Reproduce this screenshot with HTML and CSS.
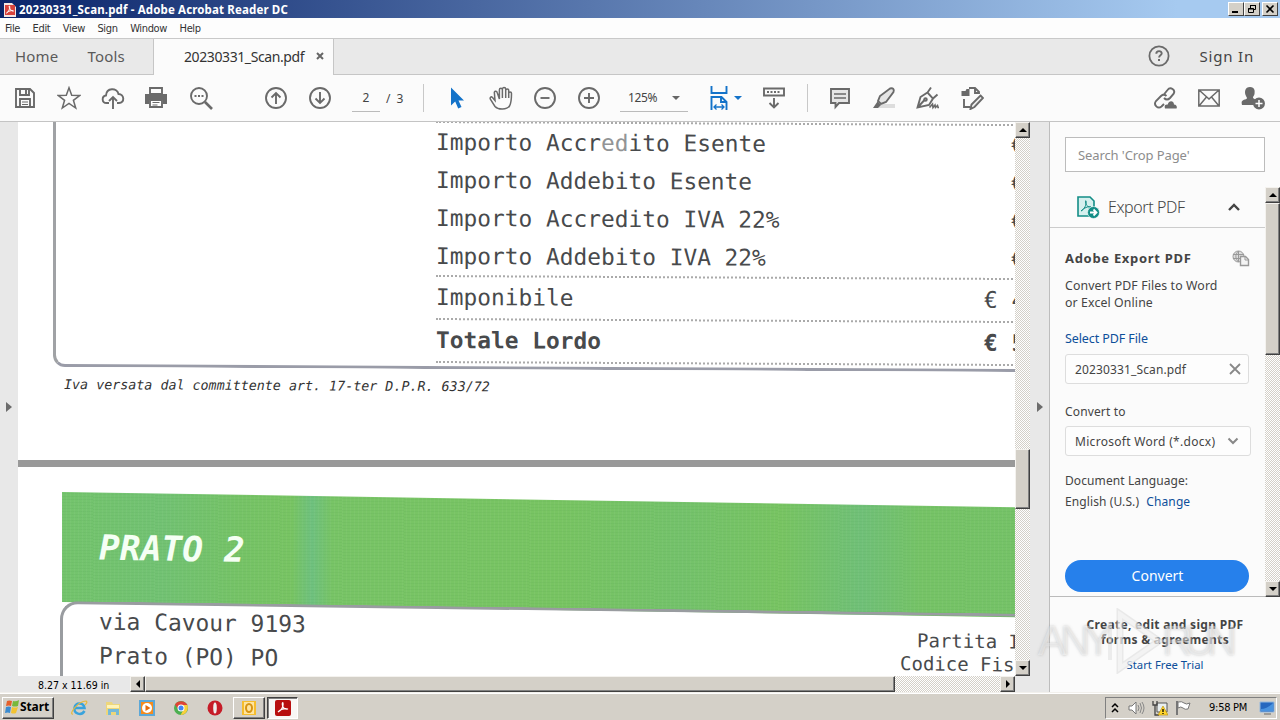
FILE: index.html
```html
<!DOCTYPE html>
<html lang="en">
<head>
  <meta charset="UTF-8" />
  <meta name="viewport" content="width=device-width, initial-scale=1" />
  <title>20230331_Scan.pdf - Adobe Acrobat Reader DC</title>
  <link rel="stylesheet" href="styles.css">
</head>
<body>
  <!-- Title bar -->
  <header class="titlebar">
    <svg class="app-icon" width="12" height="15" viewBox="0 0 12 15"><path d="M0 1h8l4 4v10H0z" fill="#f4e6e4"/><path d="M1 3h10v10H1z" fill="#d8433c"/><path d="M2.5 11c2-1 4-5 3-7-1-1 0 5 4 5-2-1-5 0-7 2" fill="none" stroke="#fff"/></svg>
    <span class="title">20230331_Scan.pdf - Adobe Acrobat Reader DC</span>
    <div class="win-buttons">
      <button><svg width="12" height="10" viewBox="0 0 12 10"><path d="M2 8h6" stroke="#000" stroke-width="2"/></svg></button>
      <button><svg width="12" height="10" viewBox="0 0 12 10"><path d="M4.5 4V1.5h5v4H8M4 1.5h6M2.5 4.500h5v4h-5zM2 5h6" fill="none" stroke="#000"/></svg></button>
      <button class="close"><svg width="12" height="10" viewBox="0 0 12 10"><path d="M2.500 1.500l7 7m0-7l-7 7" stroke="#000" stroke-width="1.600"/></svg></button>
    </div>
  </header>

  <nav class="menubar">
    <span>File</span><span>Edit</span><span>View</span><span>Sign</span><span>Window</span><span>Help</span>
  </nav>

  <div class="tabs">
    <div class="tab-list">
      <span class="home">Home</span>
      <span class="tools">Tools</span>
    </div>
    <div class="tab-active">
      <span>20230331_Scan.pdf</span>
      <svg width="8" height="8" viewBox="0 0 8 8"><path d="M1 1l6 6M7 1L1 7" stroke="#666" stroke-width="2"/></svg>
    </div>
    <div class="tab-right">
      <svg width="22" height="22" viewBox="0 0 22 22" fill="none" stroke="#6a6a6a"><circle cx="11" cy="11" r="9.600" stroke-width="1.800"/><path d="M8.300 8.800c0-3.600 5.600-3.500 5.400-.3-.1 1.900-2.600 1.900-2.600 4" stroke-width="1.900"/><path d="M11 14v2" stroke-width="2"/></svg>
      <span>Sign In</span>
    </div>
  </div>

  <div class="toolbar">
    <div class="tool"><svg viewBox="0 0 24 24"><path d="M3 3h14l4 4v14H3z"/><path d="M7 3v6h9V3M13 4v4M7 21v-8h10v8"/><path d="M9 16h6M9 18.500h6" stroke-width="1"/></svg></div>
    <div class="tool"><svg viewBox="0 0 24 24"><path d="M12 1.800l2.700 7.500 8.200.1-6.500 4.900 2.300 7.700-6.700-4.600L5.300 22l2.300-7.700-6.500-4.900 8.200-.1z" stroke-width="1.500"/></svg></div>
    <div class="tool"><svg viewBox="0 0 24 24"><path d="M8 17H5.500C.5 17 .5 10 5 9.500c.5-8 11-8 12.500-1.500C23.500 8 24 17 18 17h-2M12 23V11M8 15l4-4 4 4"/></svg></div>
    <div class="tool print"><svg viewBox="0 0 24 24"><path d="M6 2h12v6H6z"/><path d="M1 8h22v10h-4v-4H5v4H1z" fill="#6a6a6a" stroke="none"/><path d="M6 14h12v7H6z" fill="#fff"/><path d="M8.500 16.500h7M8.500 19h5" stroke-width="1.200"/></svg></div>
    <div class="tool"><svg viewBox="0 0 24 24"><circle cx="10" cy="10" r="8"/><path d="M16 16l7 7" stroke-width="2.600"/><path d="M5.500 10h9" stroke-width="2" stroke-dasharray="2 1.500"/></svg></div>
    <div class="tool group"><svg viewBox="0 0 24 24"><circle cx="12" cy="12" r="10"/><path d="M12 18V7M7.500 11.500L12 7l4.500 4.500"/></svg></div>
    <div class="tool"><svg viewBox="0 0 24 24"><circle cx="12" cy="12" r="10"/><path d="M12 6v11M7.500 12.500L12 17l4.500-4.500"/></svg></div>
    <div class="page-field">2</div>
    <div class="page-total">/ &nbsp;3</div>
    <div class="divider"></div>
    <div class="tool"><svg viewBox="0 0 24 24"><path d="M6 1.500v18l4.200-4 3 7 3.300-1.500-3-6.500h5.500z" fill="#1473c9" stroke="none"/></svg></div>
    <div class="tool"><svg viewBox="0 0 24 24"><path d="M6 14.500L3.500 11.500C2 10 .5 11.500 1.500 13.500l4.500 7c3 3.500 12 3.500 14.500-.5 1.800-3 2-7 2-12.500 0-2-2.800-2-2.800 0V12 4.500c0-2-3-2-3 0V12 3.200c0-2.200-3.300-2.200-3.300 0V12 3.800c0-2-3-2-3 0V13L8.200 6.500c-.6-2-3.300-1.300-2.800.6z" stroke-width="1.500"/></svg></div>
    <div class="tool"><svg viewBox="0 0 24 24"><circle cx="12" cy="12" r="10"/><path d="M7.500 12h9"/></svg></div>
    <div class="tool"><svg viewBox="0 0 24 24"><circle cx="12" cy="12" r="10"/><path d="M7 12h10M12 7v10"/></svg></div>
    <div class="zoom-field"><span>125%</span><i class="caret"></i></div>
    <div class="tool fit"><svg viewBox="0 0 24 24"><g stroke="#1473c9"><path d="M4.500 0v7h15V0M4.500 24V11h10l5 5v8M14 11v5h5"/><path d="M7 21h10M9.500 18.500L7 21l2.500 2.500M14.500 18.500L17 21l-2.500 2.500" stroke-width="1.300"/></g></svg><i class="caret blue"></i></div>
    <div class="tool"><svg viewBox="0 0 24 24"><path d="M2 2.500h20v7H2zM12 12v9M7.500 17l4.500 4.500 4.500-4.500"/><path d="M5 6h14" stroke-dasharray="2 1.500"/></svg></div>
    <div class="divider last"></div>
    <div class="tool"><svg viewBox="0 0 24 24"><path d="M3 3h18v14H11l-3.500 4v-4H3z" fill="#e5e5e5"/><path d="M6 8h12M6 12h12" stroke-width="1.400"/></svg></div>
    <div class="tool"><svg viewBox="0 0 24 24"><path d="M8 18h15v4H4z" fill="#ddd" stroke="none"/><path d="M18 2.500c3-1 4.500 1 3.500 3.500L14 16l-5 2-3-3 2-5z" fill="#e5e5e5"/><path d="M5.500 15.500L9 19l-3 3H1z" fill="#6a6a6a" stroke="none"/></svg></div>
    <div class="tool"><svg viewBox="0 0 24 24"><path d="M1.500 21.500L4.500 11l7-4.500 5.500 6-4 6.500zL8.500 14M11.500 6.500l3.500-5M17 12.500l4.500-4"/><circle cx="9.500" cy="13.500" r="1.300"/><path d="M13.500 21.500l3-3.500.5 3.500 2-2.500.5 2.500 2-2 .5 2h1" stroke-width="1.600"/></svg></div>
    <div class="tool"><svg viewBox="0 0 24 24"><path d="M9 2h6l4 4v2M15 2v5h4M4 13v8h6"/><path d="M1.500 5h4l1-2h3v7h-8z" fill="#6a6a6a" stroke="none"/><path d="M20.500 9.500l2.500 2.500-8.500 9-4 2 1-4.500z" fill="#eee"/></svg></div>
    <div class="tool share"><svg viewBox="0 0 24 24"><path d="M10.500 9l4-5c3-4 8.500 0 6 4L17 12c-2 2-4 2-6 0M13.500 10c-2-2-4-1.500-5.500 0l-5 5c-3 4 2 8.500 5.500 5.500l2.500-2.500" /><path d="M12 22.500c-1-3 .5-4.500 2.800-4 1-4.500 6-4 6.200 0 3 0 3.200 3 2.500 4z" fill="#6a6a6a" stroke="none"/></svg></div>
    <div class="tool"><svg viewBox="0 0 24 24"><path d="M1.800 4h20.400v16H1.800zM2 4l10 9 10-9M2 20l7.500-9M22 20l-7.500-9" stroke-width="1.500"/></svg></div>
    <div class="tool"><svg viewBox="0 0 24 24"><path d="M9 1c5 0 5 4 4.500 7-.4 2-1.500 2-1.500 4l3 2c-2 1.500-2.500 3-2 5H1c-1-4 0-4.500 3-5.500s2-1.500 1-3.500C3 6 4 1 9 1" fill="#6a6a6a" stroke="none"/><circle cx="18" cy="17.500" r="5" fill="#6a6a6a"/><path d="M14.500 17.500h7M18 14v7" stroke="#fff" stroke-width="1.500"/></svg></div>
  </div>

  <main class="workspace">
    <div class="left-rail"><i class="arrow-right"></i></div>

    <section class="viewer">
      <div class="viewer-main">
        <div class="doc">
          <!-- bottom of scanned page 2 -->
          <div class="page first">
            <div class="frame">
              <div class="amounts">
                <div class="row"><span class="label">Importo Accr<span class="faded">ed</span>ito Esente</span><span>€</span></div>
                <div class="row"><span class="label">Importo Addebito Esente</span><span>€</span></div>
                <div class="row"><span class="label">Importo Accredito IVA 22%</span><span>€</span></div>
                <div class="row"><span class="label">Importo Addebito IVA 22%</span><span>€</span></div>
                <div class="row total"><span class="label">Imponibile</span><span>€ 4</span></div>
                <div class="row total bold"><span class="label">Totale Lordo</span><span>€ 5</span></div>
              </div>
            </div>
            <p class="note">Iva versata dal committente art. 17-ter D.P.R. 633/72</p>
          </div>
          <!-- top of scanned page 3 -->
          <div class="page second">
            <div class="band"><h1>PRATO 2</h1></div>
            <div class="address">
              <div class="address-left">
                <p>via Cavour 9193</p>
                <p>Prato (PO) PO</p>
              </div>
              <div class="address-right">
                <p>Partita IVA</p>
                <p>Codice Fiscale</p>
              </div>
            </div>
          </div>
        </div>
        <div class="vscroll">
          <div class="sb-btn"><i class="up"></i></div>
          <div class="sb-thumb"></div>
          <div class="sb-btn bottom"><i class="down"></i></div>
        </div>
      </div>
      <div class="viewer-foot">
        <span class="page-size">8.27 x 11.69 in</span>
        <div class="hscroll">
          <div class="sb-btn"><i class="left"></i></div>
          <div class="sb-thumb"></div>
          <div class="sb-btn bottom"><i class="right"></i></div>
        </div>
      </div>
    </section>

    <div class="right-rail"><i class="arrow-right"></i></div>

    <aside class="panel">
      <div class="search">Search 'Crop Page'</div>
      <div class="panel-body">
        <div class="panel-content">
          <div class="panel-head">
            <svg width="24" height="24" viewBox="0 0 24 24" fill="none"><path d="M2 2h12l4 4v15H2z" fill="#d5f0ee" stroke="#138d86" stroke-width="1.600"/><path d="M5 16c3-1 6-7 5-10-1-2-1 7 5 6-3-1-7 1-10 4" stroke="#138d86"/><circle cx="17.500" cy="17.500" r="6" fill="#138d86" stroke="#fff" stroke-width=".6"/><path d="M14 17.500h6M17.500 14.500l3 3-3 3" stroke="#fff" stroke-width="1.800"/></svg>
            <span>Export PDF</span>
            <svg class="chev" width="14" height="9" viewBox="0 0 14 9"><path d="M2 7l5-5 5 5" fill="none" stroke="#444" stroke-width="2.400"/></svg>
          </div>
          <div class="export">
            <div class="export-title">
              <strong>Adobe Export PDF</strong>
              <svg width="18" height="17" viewBox="0 0 18 17" fill="none" stroke="#999"><circle cx="6.500" cy="6.500" r="5.500" fill="#ddd"/><path d="M6.500 1v11M1 4.500h11M1 8.500h7M6.500 1c-4 4-3 8 0 11"/><path d="M8.500 6.500h5l3 3v6h-8z" fill="#f4f4f4" stroke-width="1.400"/><path d="M13 7v3h3"/></svg>
            </div>
            <p class="desc">Convert PDF Files to Word<br>or Excel Online</p>
            <a class="select-link">Select PDF File</a>
            <div class="field file"><span>20230331_Scan.pdf</span><svg width="12" height="12" viewBox="0 0 12 12"><path d="M1 1l10 10M11 1L1 11" stroke="#888" stroke-width="1.800"/></svg></div>
            <label class="to">Convert to</label>
            <div class="field format"><span>Microsoft Word (*.docx)</span><svg width="12" height="8" viewBox="0 0 12 8"><path d="M1.500 1.500L6 6l4.500-4.500" fill="none" stroke="#888" stroke-width="2"/></svg></div>
            <p class="lang">Document Language:</p>
            <p class="lang-value">English (U.S.) <a>Change</a></p>
            <button class="convert">Convert</button>
          </div>
        </div>
        <div class="vscroll">
          <div class="sb-btn"><i class="up"></i></div>
          <div class="sb-thumb"></div>
          <div class="sb-btn bottom"><i class="down"></i></div>
        </div>
      </div>
      <div class="promo">
        <strong>Create, edit and sign PDF<br>forms &amp; agreements</strong>
        <a>Start Free Trial</a>
      </div>
      <div class="watermark">
        <span>ANY</span>
        <svg width="64" height="66" viewBox="0 0 64 66"><path d="M20 6l39 27-39 27z" fill="none" stroke="#d8d8d8" stroke-opacity=".5" stroke-width="7"/><path d="M20 6l39 27-39 27z" fill="none" stroke="#fff" stroke-opacity=".45" stroke-width="4"/><path d="M10 14v38" stroke="#ddd" stroke-opacity=".5" stroke-width="4"/></svg>
        <span>RUN</span>
      </div>
    </aside>
  </main>

  <!-- Windows taskbar -->
  <footer class="taskbar">
    <button class="start"><svg width="16" height="16" viewBox="0 0 16 16"><path d="M3 2q2-1 5 0L7 7q-2-1-5 0z" fill="#e5602b"/><path d="M9 2q3 1 6-1l-1 6q-3 1-6 0z" fill="#78b83b"/><path d="M2 8q3-1 5 0l-1 6q-2-1-5 0z" fill="#3b8bd0"/><path d="M8 8q3 1 6 0l-2 6q-2 1-5 0z" fill="#f3c332"/></svg>Start</button>
    <div class="quick">
      <svg viewBox="0 0 18 18" fill="none"><path d="M14.500 12c-3 5-11 3-10-3s9-6 10 0H5" stroke="#39a3dc" stroke-width="2.500"/><path d="M3 15C-2 16 8 2 16 2c2 1 0 3-1 4" stroke="#e7b93c" stroke-width="1.200"/></svg>
      <svg viewBox="0 0 18 18"><path d="M2 3h6l1 2h7v11H2z" fill="#edd67b"/><path d="M3 6h12v3H3z" fill="#fff3b8"/><path d="M4 10h11v6h-3v-3H7v3H4z" fill="#75b9d8"/></svg>
      <svg viewBox="0 0 18 18"><path d="M1 1h16v16H1z" fill="#5ca8d8"/><path d="M3 3h12v12H3z" fill="#f58b1e"/><circle cx="9" cy="9" r="5" fill="#fff"/><path d="M7.500 6l5 3-5 3z" fill="#e66b0b"/></svg>
      <svg viewBox="0 0 18 18"><circle cx="9" cy="9" r="7" fill="#4caf50"/><path d="M3 5.500C6 1 13 1 15.500 6H9L6 10z" fill="#df4437"/><path d="M15.500 6c1.500 5-2 10-7 10L12 10 11 6z" fill="#f9cf3b"/><circle cx="9" cy="9" r="3.500" fill="#fff"/><circle cx="9" cy="9" r="2.500" fill="#4285f4"/></svg>
      <svg viewBox="0 0 18 18"><circle cx="9" cy="9" r="7.500" fill="#c61c28"/><ellipse cx="9" cy="9" rx="1.800" ry="5.500" fill="#eee"/></svg>
    </div>
    <div class="task"><svg width="16" height="16" viewBox="0 0 16 16"><path d="M1 1h14v14H1z" fill="#f6bd2d"/><path d="M3 2h10v12H3z" fill="#ffe5a0"/><ellipse cx="8" cy="8" rx="3" ry="4" fill="none" stroke="#d79516" stroke-width="2"/></svg></div>
    <div class="task pressed"><svg width="16" height="16" viewBox="0 0 16 16"><rect width="16" height="16" rx="2" fill="#b80f0f"/><path d="M3 12c3-1 6-6 5-9-1-2-2 7 5 6-4-1-7 0-10 3" fill="none" stroke="#fff" stroke-width="1.200"/></svg></div>
    <div class="tray">
      <svg width="8" height="12" viewBox="0 0 8 12"><path d="M1 5l3-3 3 3M1 10l3-3 3 3" fill="none" stroke="#000" stroke-width="1.500"/></svg>
      <svg class="speaker" width="17" height="14" viewBox="0 0 17 14" fill="none"><path d="M1 5h3l4-4v12L4 9H1z" fill="#fff" stroke="#777"/><path d="M10 4q2 3 0 6M12 2q3 5 0 10M14 1q4 6 0 12" stroke="#888"/></svg>
      <svg class="network" width="16" height="16" viewBox="0 0 16 16"><path d="M5 3h10v9H5z" fill="#e8eef0" stroke="#555"/><path d="M1 1v4h4V1M3 5v10h4" fill="none" stroke="#444" stroke-width="1.300"/><path d="M11 6l5 9H6z" fill="#ffd52e" stroke="#b58a00" stroke-width=".6"/><path d="M11 9v3M11 13v1" stroke="#000" stroke-width="1.300"/></svg>
      <svg class="flag" width="17" height="16" viewBox="0 0 17 16"><path d="M2 1v14" stroke="#777" stroke-width="2"/><path d="M3 2q4-1 6 1t6 0l-2 6q-3 1-5-1t-5 0z" fill="#fff" stroke="#777"/></svg>
      <span class="clock">9:58 PM</span>
      <svg class="desktop" width="16" height="14" viewBox="0 0 16 14"><path d="M1 1h14v10H1z" fill="#2668bf" stroke="#94b9df"/><path d="M2 8q6 0 12-6v8H2z" fill="#4a93df"/><path d="M5 13h7" stroke="#666"/></svg>
    </div>
  </footer>
</body>
</html>
```
FILE: styles.css
```css
* {
  margin: 0;
  padding: 0;
  box-sizing: border-box;
}

body {
  width: 1280px;
  height: 720px;
  overflow: hidden;
  display: flex;
  flex-direction: column;
  background: #fbfbfb;
  color: #444;
  font-family: "Noto Sans", "Open Sans", sans-serif;
  white-space: nowrap;
}

svg {
  display: block;
  flex: none;
}

button {
  font: inherit;
  border: none;
}

/* Title bar and menu */
.titlebar {
  height: 18px;
  flex: none;
  display: flex;
  align-items: center;
  padding: 0 2px 0 4px;
  background: linear-gradient(90deg, #0a246a, #a6caf0 92%);
}

.title {
  margin-left: 3px;
  color: #fff;
  font-size: 11.5px;
  font-weight: bold;
  letter-spacing: 0.14px;
}

.win-buttons {
  margin-left: auto;
  display: flex;
}

.win-buttons button {
  width: 16px;
  height: 14px;
  padding: 1px;
  background: #d4d0c8;
  border: 1px solid;
  border-color: #fff #404040 #404040 #fff;
}

.win-buttons .close {
  margin-left: 2px;
}

.menubar {
  height: 20px;
  flex: none;
  display: flex;
  align-items: center;
  gap: 12.500px;
  padding-left: 5px;
  font-family: "DejaVu Sans Condensed", "Noto Sans", sans-serif;
  font-size: 11px;
  letter-spacing: -0.35px;
  color: #333;
  background: #fdfdfd;
}

/* Tabs */
.tabs {
  height: 37px;
  flex: none;
  display: flex;
  background: #e9e9e9;
  border-top: 1px solid #c9c9c9;
  font-size: 15px;
}

.tab-list {
  width: 154px;
  display: flex;
  align-items: center;
  padding: 0 0 2px 15px;
  border-right: 1px solid #c6c6c6;
  border-bottom: 1px solid #c6c6c6;
  letter-spacing: 0.2px;
  color: #5a5a5a;
}

.tools {
  margin-left: 29px;
}

.tab-active {
  width: 179px;
  display: flex;
  align-items: center;
  justify-content: space-between;
  padding: 0 9px 2px 30px;
  background: #fbfbfb;
  color: #333;
  font-size: 14px;
  letter-spacing: -0.4px;
}

.tab-right {
  flex: 1;
  display: flex;
  align-items: center;
  justify-content: flex-end;
  gap: 30px;
  padding: 0 26px 2px 0;
  border-left: 1px solid #c6c6c6;
  border-bottom: 1px solid #c6c6c6;
  letter-spacing: 0.8px;
}

/* Toolbar */
.toolbar {
  height: 47px;
  flex: none;
  display: flex;
  align-items: center;
  padding: 0 5px 0 3px;
  border-bottom: 1px solid #c4c4c4;
  font-size: 12px;
}

.tool {
  width: 44px;
  flex: none;
  display: flex;
  justify-content: center;
}

.tool svg {
  width: 24px;
  height: 24px;
  fill: none;
  stroke: #6a6a6a;
  stroke-width: 1.9;
}

.tool.print {
  padding-right: 2px;
}

.tool.group {
  margin-left: 31px;
}

.tool.share {
  margin-left: auto;
}

.tool.fit {
  width: 56px;
  align-items: center;
  gap: 3px;
}

.page-field {
  width: 28px;
  height: 28px;
  margin-left: 10px;
  line-height: 28px;
  text-align: center;
  border-bottom: 1px solid #bbb;
}

.page-total {
  width: 43px;
  padding-left: 6px;
  letter-spacing: -0.1px;
}

.divider {
  width: 1px;
  height: 28px;
  margin-right: 11px;
  background: #c8c8c8;
}

.divider.last {
  margin: 0 10px 0 11px;
}

.zoom-field {
  width: 68px;
  height: 28px;
  margin: 0 8px 0 9px;
  padding: 0 8px;
  display: flex;
  align-items: center;
  justify-content: space-between;
  border-bottom: 1px solid #bbb;
  letter-spacing: -0.4px;
}

.caret {
  border: 4px solid transparent;
  border-top-color: #666;
  border-bottom: none;
}

.caret.blue {
  border-top-color: #1473c9;
}

/* Workspace */
.workspace {
  flex: 1;
  display: flex;
  min-height: 0;
}

.left-rail {
  width: 18px;
  display: flex;
  align-items: center;
  justify-content: center;
  background: #e8e8e8;
}

.right-rail {
  width: 20px;
  display: flex;
  align-items: center;
  justify-content: center;
  background: #e8e8e8;
  border-right: 1px solid #bdbdbd;
}

.arrow-right {
  border: 5.5px solid transparent;
  border-left: 6px solid #6c6c6c;
  border-right: none;
}

.viewer {
  width: 1012px;
  display: flex;
  flex-direction: column;
}

.viewer-main {
  height: 554px;
  display: flex;
}

.doc {
  width: 997px;
  overflow: hidden;
  background: #fff;
  font-family: "DejaVu Sans Mono", monospace;
  color: #484a4c;
}

.page.first {
  height: 338px;
}

/* the scan is slightly tilted, so every block slopes down to the right */
.frame {
  display: flow-root;
  width: 1100px;
  height: 245px;
  margin-left: 35px;
  padding-left: 380px;
  border-left: 3px solid #a0a2a5;
  border-bottom: 3px solid #9a9ca8;
  border-bottom-left-radius: 12px;
  transform: skewY(0.3deg);
  transform-origin: 0 100%;
}

.amounts {
  margin-top: -3px;
  border-top: 2px dotted #aaa;
  border-bottom: 2px dotted #aaa;
  font-size: 22.84px;
}

.row {
  height: 38px;
  padding-bottom: 1px;
  display: flex;
  align-items: center;
}

.label {
  width: 575px;
}

.faded {
  color: #929496;
}

.row.total {
  height: 43px;
  border-top: 2px dotted #aaa;
}

.total .label {
  width: 548px;
}

.bold {
  font-weight: bold;
}

.note {
  margin: 9px 0 0 46px;
  font-size: 13.35px;
  font-style: italic;
  line-height: 18px;
  color: #333;
  transform: skewY(0.3deg);
  transform-origin: 0 0;
}

.page.second {
  height: 280px;
  padding-top: 25px;
  border-top: 7px solid #999;
}

.band {
  width: 1000px;
  height: 110px;
  margin-left: 44px;
  padding-left: 37px;
  background:
    repeating-linear-gradient(0deg, rgba(40, 120, 50, 0.06) 0 1px, transparent 1px 3px),
    repeating-linear-gradient(90deg, rgba(255, 255, 255, 0.04) 0 1px, transparent 1px 4px),
    linear-gradient(90deg, #74c46c, #72c273 10%, #76c366 18%, #78c463 23%, #6fc17f 25%, #78c466 27%, #78c462 50%, #74c26b 62%, #78c462 72%, #70c078 80%, #76c366 86%, #75c268);
  transform: skewY(0.92deg);
  transform-origin: 0 0;
}

.band h1 {
  font-size: 34.600px;
  font-style: italic;
  line-height: 111px;
  color: #f5fff4;
}

.address {
  width: 1100px;
  height: 140px;
  margin-left: 42px;
  margin-top: -1px;
  display: flex;
  border-top: 3px solid #999ca0;
  border-left: 3px solid #999ca0;
  border-top-left-radius: 18px;
  transform: skewY(0.75deg);
  transform-origin: 0 0;
}

.address-left {
  width: 837px;
  padding-left: 36px;
  font-size: 22.9px;
  line-height: 34px;
}

.address-right {
  padding-top: 14px;
  font-size: 19px;
  line-height: 23px;
}

.address-right p:first-child {
  padding-left: 17px;
}

/* Classic scrollbars */
.vscroll {
  width: 15px;
  display: flex;
  flex-direction: column;
  background: repeating-conic-gradient(#d4d0c8 0 25%, #fff 0 50%) 0 0 / 2px 2px;
}

.sb-btn,
.sb-thumb {
  flex: none;
  background: #d4d0c8;
  border: 1px solid;
  border-color: #f4f2ee #404040 #404040 #f4f2ee;
  box-shadow: inset -1px -1px #808080;
}

.sb-btn {
  width: 15px;
  height: 16px;
  display: flex;
  align-items: center;
  justify-content: center;
}

.vscroll .bottom {
  margin-top: auto;
}

.viewer-main .sb-thumb {
  height: 60px;
  margin-top: 311px;
}

.up {
  border: 4px solid transparent;
  border-top: none;
  border-bottom-color: #000;
}

.down {
  border: 4px solid transparent;
  border-bottom: none;
  border-top-color: #000;
}

.left {
  border: 4px solid transparent;
  border-left: none;
  border-right-color: #000;
}

.right {
  border: 4px solid transparent;
  border-right: none;
  border-left-color: #000;
}

.viewer-foot {
  height: 16px;
  display: flex;
  background: #e8e8e8;
}

.page-size {
  width: 112px;
  padding-left: 20px;
  font-family: "DejaVu Sans Condensed", "Noto Sans", sans-serif;
  font-size: 10.5px;
  line-height: 18px;
  letter-spacing: 0;
  color: #000;
}

.hscroll {
  width: 885px;
  display: flex;
  background: repeating-conic-gradient(#d4d0c8 0 25%, #fff 0 50%) 0 0 / 2px 2px;
}

.hscroll .sb-thumb {
  width: 750px;
}

.hscroll .bottom {
  margin-left: auto;
}

/* Tools panel */
.panel {
  position: relative;
  width: 230px;
  display: flex;
  flex-direction: column;
  background: #fbfbfb;
  font-size: 12px;
}

.search {
  height: 35px;
  margin: 15px;
  padding-left: 12px;
  flex: none;
  border: 1px solid #bcbcbc;
  background: #fff;
  line-height: 34px;
  font-size: 13px;
  letter-spacing: -0.1px;
  color: #8d8d8d;
}

.panel-body {
  height: 410px;
  flex: none;
  display: flex;
}

.panel-content {
  width: 215px;
  border-bottom: 1px solid #bbb;
}

.panel-head {
  height: 41px;
  display: flex;
  align-items: center;
  padding: 0 24px 0 26px;
  border-bottom: 1px solid #ccc;
  font-size: 16px;
  font-weight: 300;
  letter-spacing: -0.4px;
}

.panel-head span {
  margin-left: 8px;
}

.chev {
  margin-left: auto;
}

.export {
  padding: 20px 15px 0;
}

.export-title {
  height: 20px;
  display: flex;
  align-items: center;
  justify-content: space-between;
  font-size: 13px;
  letter-spacing: 0.7px;
}

.desc {
  margin-top: 9px;
  font-size: 12.3px;
  line-height: 17px;
  letter-spacing: 0.12px;
}

a {
  color: #0d4f9a;
}

.select-link {
  display: block;
  margin-top: 18px;
  font-size: 12.5px;
  line-height: 20px;
  letter-spacing: -0.1px;
}

.field {
  height: 30px;
  display: flex;
  align-items: center;
  justify-content: space-between;
  padding: 0 7px 0 9px;
  border: 1px solid #ddd;
  border-radius: 3px;
  background: #fdfdfd;
}

.file {
  width: 184px;
  margin-top: 5px;
  letter-spacing: 0.13px;
}

.to {
  display: block;
  margin-top: 18px;
  line-height: 20px;
  letter-spacing: 0.15px;
}

.format {
  width: 186px;
  margin-top: 4px;
  padding-right: 11px;
  letter-spacing: 0.3px;
}

.lang {
  margin-top: 15px;
  line-height: 20px;
  letter-spacing: 0.1px;
}

.lang-value {
  line-height: 22px;
  letter-spacing: 0.1px;
}

.lang-value a {
  margin-left: 4px;
}

.convert {
  width: 184px;
  height: 32px;
  margin-top: 47px;
  padding: 0 0 2px 1px;
  border-radius: 16px;
  background: #2680eb;
  color: #fff;
  font-size: 14px;
}

.panel-body .sb-thumb {
  height: 152px;
}

.promo {
  padding-top: 20px;
  text-align: center;
  line-height: 15px;
}

.promo strong {
  display: block;
  letter-spacing: 0.3px;
}

.promo a {
  display: block;
  margin-top: 10px;
  font-size: 11.300px;
}

.watermark {
  position: absolute;
  left: -12px;
  bottom: 18px;
  display: flex;
  align-items: center;
  font-family: "Liberation Sans", sans-serif;
  font-size: 42px;
  line-height: 66px;
  color: rgba(255, 255, 255, 0.4);
  text-shadow: 0 0 3px rgba(120, 120, 120, 0.35);
}

.watermark span:first-child {
  width: 62px;
  letter-spacing: -6px;
}

.watermark span:last-child {
  margin-left: -2px;
  letter-spacing: -8px;
}

/* Taskbar */
.taskbar {
  height: 28px;
  flex: none;
  display: flex;
  align-items: center;
  padding: 2px 3px 0 2px;
  background: #d4d0c8;
  border-top: 1px solid #f2f0ec;
  box-shadow: inset 0 1px #fff;
}

.start {
  width: 52px;
  height: 22px;
  display: flex;
  align-items: center;
  padding: 0 0 2px 1px;
  background: #d4d0c8;
  border: 1px solid;
  border-color: #fff #404040 #404040 #fff;
  box-shadow: inset -1px -1px #808080;
  font-size: 12px;
  font-weight: bold;
  letter-spacing: -0.1px;
  color: #000;
}

.quick {
  display: flex;
  gap: 16px;
  margin-left: 16px;
}

.quick svg {
  width: 18px;
  height: 18px;
}

.task {
  width: 32px;
  height: 22px;
  margin-left: 9px;
  display: flex;
  align-items: center;
  justify-content: center;
  border: 1px solid;
  border-color: #fff #404040 #404040 #fff;
  box-shadow: inset -1px -1px #808080;
}

.task.pressed {
  width: 31px;
  margin-left: 2px;
  background: #f8f7f5;
  border-color: #404040 #fff #fff #404040;
  box-shadow: inset 1px 1px #808080;
}

.tray {
  width: 172px;
  height: 22px;
  margin-left: auto;
  padding: 0 1px 0 5px;
  display: flex;
  align-items: center;
  border: 1px solid;
  border-color: #808080 #fff #fff #808080;
}

.speaker {
  margin-left: 9px;
}

.network {
  margin-left: 7px;
}

.flag {
  margin-left: 7px;
}

.clock {
  margin-left: 17px;
  font-family: "DejaVu Sans Condensed", "Noto Sans", sans-serif;
  font-size: 11px;
  letter-spacing: -0.25px;
  color: #000;
}

.desktop {
  margin-left: auto;
}
```
